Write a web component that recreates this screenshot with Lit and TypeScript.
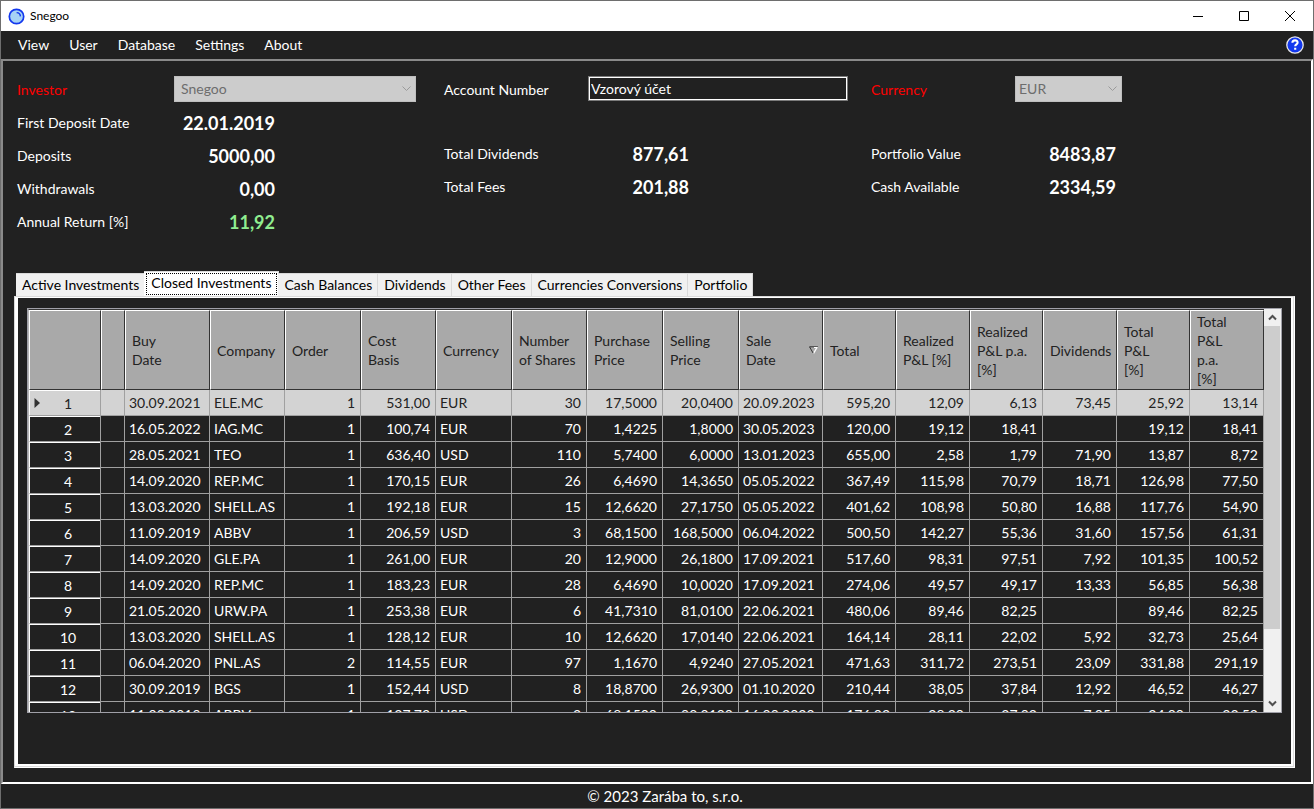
import { LitElement, html, css } from "lit";
import { customElement, state } from "lit/decorators.js";
import { classMap } from "lit/directives/class-map.js";

type Align = "left" | "right";
interface Column { label: string; width: number; align: Align; sorted?: boolean }

const COLUMNS: Column[] = [
  { label: "Buy\nDate", width: 85, align: "left" },
  { label: "Company", width: 75, align: "left" },
  { label: "Order", width: 76, align: "right" },
  { label: "Cost\nBasis", width: 75, align: "right" },
  { label: "Currency", width: 76, align: "left" },
  { label: "Number\nof Shares", width: 75, align: "right" },
  { label: "Purchase\nPrice", width: 76, align: "right" },
  { label: "Selling\nPrice", width: 76, align: "right" },
  { label: "Sale\nDate", width: 84, align: "left", sorted: true },
  { label: "Total", width: 73, align: "right" },
  { label: "Realized\nP&L [%]", width: 74, align: "right" },
  { label: "Realized\nP&L p.a.\n[%]", width: 73, align: "right" },
  { label: "Dividends", width: 74, align: "right" },
  { label: "Total\nP&L\n[%]", width: 73, align: "right" },
  { label: "Total\nP&L\np.a.\n[%]", width: 74, align: "right" },
];

const ROWS: string[][] = [
  "30.09.2021|ELE.MC|1|531,00|EUR|30|17,5000|20,0400|20.09.2023|595,20|12,09|6,13|73,45|25,92|13,14",
  "16.05.2022|IAG.MC|1|100,74|EUR|70|1,4225|1,8000|30.05.2023|120,00|19,12|18,41||19,12|18,41",
  "28.05.2021|TEO|1|636,40|USD|110|5,7400|6,0000|13.01.2023|655,00|2,58|1,79|71,90|13,87|8,72",
  "14.09.2020|REP.MC|1|170,15|EUR|26|6,4690|14,3650|05.05.2022|367,49|115,98|70,79|18,71|126,98|77,50",
  "13.03.2020|SHELL.AS|1|192,18|EUR|15|12,6620|27,1750|05.05.2022|401,62|108,98|50,80|16,88|117,76|54,90",
  "11.09.2019|ABBV|1|206,59|USD|3|68,1500|168,5000|06.04.2022|500,50|142,27|55,36|31,60|157,56|61,31",
  "14.09.2020|GLE.PA|1|261,00|EUR|20|12,9000|26,1800|17.09.2021|517,60|98,31|97,51|7,92|101,35|100,52",
  "14.09.2020|REP.MC|1|183,23|EUR|28|6,4690|10,0020|17.09.2021|274,06|49,57|49,17|13,33|56,85|56,38",
  "21.05.2020|URW.PA|1|253,38|EUR|6|41,7310|81,0100|22.06.2021|480,06|89,46|82,25||89,46|82,25",
  "13.03.2020|SHELL.AS|1|128,12|EUR|10|12,6620|17,0140|22.06.2021|164,14|28,11|22,02|5,92|32,73|25,64",
  "06.04.2020|PNL.AS|2|114,55|EUR|97|1,1670|4,9240|27.05.2021|471,63|311,72|273,51|23,09|331,88|291,19",
  "30.09.2019|BGS|1|152,44|USD|8|18,8700|26,9300|01.10.2020|210,44|38,05|37,84|12,92|46,52|46,27",
  "11.09.2019|ABBV|1|137,73|USD|2|68,1500|90,0100|16.09.2020|176,02|28,20|27,92|7,05|34,00|33,52",
].map((line) => line.split("|"));

const TABS = [
  "Active Investments", "Closed Investments", "Cash Balances", "Dividends",
  "Other Fees", "Currencies Conversions", "Portfolio",
];

@customElement("investments-grid")
export class InvestmentsGrid extends LitElement {
  @state() private current = 0;

  static styles = css`
    :host {
      display: flex;
      min-height: 0;
      border: 1px solid #a0a0a8;
      font-size: 14px;
      line-height: 19px;
      color: #fff;
    }
    .viewport { flex: 1; min-width: 0; overflow: hidden; border-top: 1px solid #333; border-left: 1px solid #b8b8b8; }
    table { width: 100%; table-layout: fixed; border-collapse: separate; border-spacing: 0; }
    th, td { box-sizing: border-box; padding: 0; font-weight: 400; white-space: nowrap; }
    thead th {
      height: 80px;
      background: #a9a9a9;
      color: #222;
      text-align: left;
      vertical-align: middle;
      white-space: pre;
      padding-left: 6px;
      border-top: 1px solid #fff;
      border-left: 1px solid #fff;
      border-right: 1px solid #333;
      border-bottom: 1px solid #333;
    }
    .head { display: flex; align-items: center; justify-content: space-between; padding-right: 4px; }
    tbody td, tbody th { height: 26px; border-right: 1px solid #a0a0a0; border-bottom: 1px solid #a0a0a0; }
    tbody td { padding: 0 5px 0 4px; }
    td.right { text-align: right; }
    tbody th { border-left: 1px solid #fff; box-shadow: inset 0 1px #fff; }
    .rowhead { display: grid; grid-template-columns: 8px 1fr 2px; align-items: center; padding: 1px 4px 0; }
    tr.current { background: #d3d3d3; color: #222; }
    .marker { display: block; }
    .bar { width: 17px; flex: none; display: flex; flex-direction: column; background: #f0f0f0; }
    .bar button { height: 17px; padding: 0; border: 0; background: #f0f0f0; display: grid; place-items: center; }
    .track { flex: 1; display: flex; flex-direction: column; padding-right: 1px; }
    .thumb { height: 82%; background: #cdcdcd; }
  `;

  render() {
    return html`
      <div class="viewport">
        <table aria-label="Closed investments">
          <colgroup>
            <col width="72" /><col width="24" />
            ${COLUMNS.map((c) => html`<col width=${c.width} />`)}
          </colgroup>
          <thead>
            <tr>
              <th></th><th></th>
              ${COLUMNS.map((c) => html`<th scope="col">${c.sorted
                ? html`<div class="head"><span>${c.label}</span><svg width="9" height="8" viewBox="0 0 9 8"><path d="M8.5 0.5L4.5 7.5" stroke="#fff" stroke-width="1.4" /><path d="M9 0.8H0.5L4.2 7.2" fill="none" stroke="#333" /><path d="M5 1.5H8.5" stroke="#fff" /></svg></div>`
                : c.label}</th>`)}
            </tr>
          </thead>
          <tbody>
            ${ROWS.map((row, i) => html`
              <tr class=${classMap({ current: i === this.current })} @click=${() => (this.current = i)}>
                <th scope="row"><div class="rowhead">
                  <span>${i === this.current
                    ? html`<svg class="marker" width="6" height="10" viewBox="0 0 6 10"><path d="M0.5 0V10L6 5Z" fill="#333" /></svg>`
                    : ""}</span><span>${i + 1}</span><span></span>
                </div></th>
                <td></td>
                ${row.map((v, c) => html`<td class=${COLUMNS[c].align}>${v}</td>`)}
              </tr>`)}
          </tbody>
        </table>
      </div>
      <div class="bar">
        <button aria-label="Scroll up"><svg width="9" height="7" viewBox="0 0 9 7"><path d="M1 5.5L4.5 2L8 5.5" fill="none" stroke="#505050" stroke-width="2" /></svg></button>
        <div class="track"><div class="thumb"></div></div>
        <button aria-label="Scroll down"><svg width="9" height="7" viewBox="0 0 9 7"><path d="M1 1.5L4.5 5L8 1.5" fill="none" stroke="#505050" stroke-width="2" /></svg></button>
      </div>
    `;
  }
}

@customElement("app-root")
export class AppRoot extends LitElement {
  @state() private tab = 1;

  static styles = css`
    :host {
      display: flex;
      flex-direction: column;
      box-sizing: border-box;
      height: 100vh;
      min-height: 560px;
      border: 1px solid #6e6e6e;
      background: #212121;
      color: #fff;
      font: 14px/20px Lato, "Open Sans", sans-serif;
    }
    button, input, select { font: inherit; color: inherit; margin: 0; border-radius: 0; }
    .titlebar { display: flex; align-items: center; height: 30px; background: #fff; color: #000; padding-left: 7px; font-size: 12px; }
    .titlebar .name { flex: 1; padding-left: 5px; }
    .titlebar button { width: 46px; height: 30px; padding: 0; border: 0; background: none; display: grid; place-items: center; }
    .menubar { display: flex; align-items: center; height: 28px; padding: 0 9px 0 7px; }
    .menubar nav { flex: 1; display: flex; }
    .menubar button { border: 0; background: none; padding: 0 10px; }
    .menubar .help { display: flex; padding: 0; }
    .body {
      flex: 1;
      min-height: 0;
      display: flex;
      flex-direction: column;
      border: 2px solid #fff;
      border-top-color: #8a8a8a;
      border-left-color: #8a8a8a;
      padding: 12px 0 14px 11px;
    }
    .summary { display: grid; grid-template-columns: repeat(3, 1fr); padding: 0 13px 0 3px; height: 197px; align-items: start; }
    .group { display: grid; align-items: center; grid-auto-rows: 33px; }
    .first { grid-template-columns: 157px 101px 1fr; }
    .second { grid-template-columns: 144px 101px 1fr; grid-template-rows: 33px 31px; }
    .top { display: grid; align-items: center; grid-column: 1 / -1; grid-template-columns: subgrid; }
    .top > :last-child { grid-column: 2 / -1; margin-bottom: 2px; }
    .required { color: #f00; }
    .value { font-size: 18px; font-weight: 700; text-align: right; }
    .good { color: #90ee90; }
    .gap { grid-column: 1 / -1; }
    .combo { display: grid; height: 26px; align-items: center; }
    .combo.wide { width: 242px; }
    .combo.narrow { width: 107px; }
    .combo select, .combo svg { grid-area: 1 / 1; }
    .combo select { appearance: none; height: 26px; width: 100%; padding: 0 6px; border: 1px solid #bfbfbf; background: #ccc; color: #6d6d6d; opacity: 1; }
    .combo.narrow select { padding-left: 3px; }
    .combo svg { justify-self: end; margin-right: 5px; }
    .account { box-sizing: border-box; width: 260px; height: 25px; padding: 0 2px 1px; border: 1px solid #7a7a7a; outline: 1px solid #fff; outline-offset: -2px; background: #212121; }
    .tabs { display: flex; align-items: flex-end; padding-left: 2px; height: 26px; }
    .tabs button {
      height: 23px; padding: 0 5px 0 6px; border: solid #d9d9d9; border-width: 1px 1px 0 0;
      background: #f0f0f0; color: #000; white-space: nowrap;
    }
    .tabs button.active { height: 25px; background: #fff; padding: 0 1px 1px 2px; margin: 0 -1px; }
    .tabs button span { display: block; }
    .tabs button.active span { border: 1px dotted #000; padding: 0 5px 2px 4px; line-height: 18px; }
    .page {
      flex: 1;
      min-height: 0;
      display: flex;
      flex-direction: column;
      margin-right: 16px;
      border: 1px solid #fff;
      border-top-color: #d9d9d9;
      border-left-color: #d9d9d9;
      padding: 11px 12px 54px;
      box-shadow: inset -1px -1px #dcdcdc, inset 3px 1px #fff, inset -3px -3px #fff;
    }
    investments-grid { flex: 1; }
    footer { height: 24px; display: grid; place-items: center; padding-left: 16px; font-size: 15px; line-height: 24px; }
  `;

  private arrow = html`<svg width="9" height="6" viewBox="0 0 9 6"><path d="M0.5 0.5L4.5 4.5L8.5 0.5" fill="none" stroke="#9a9a9a" /></svg>`;

  render() {
    return html`
      <header class="titlebar">
        <svg width="17" height="17" viewBox="0 0 17 17"><circle cx="8.5" cy="8.5" r="7.2" fill="#a6d3f5" stroke="#1338ee" stroke-width="1.7" /><path d="M8.6 4.6A4 4 0 0 1 12.4 8.4" fill="none" stroke="#1338ee" stroke-width="1.4" /></svg>
        <span class="name">Snegoo</span>
        <button aria-label="Minimize"><svg width="10" height="10" viewBox="0 0 10 10"><path d="M0 5.5H10" stroke="#000" /></svg></button>
        <button aria-label="Maximize"><svg width="10" height="10" viewBox="0 0 10 10"><path d="M0.5 0.5H9.5V9.5H0.5Z" fill="none" stroke="#000" /></svg></button>
        <button aria-label="Close"><svg width="10" height="10" viewBox="0 0 10 10"><path d="M0 0L10 10M10 0L0 10" stroke="#000" /></svg></button>
      </header>
      <div class="menubar">
        <nav>${["View", "User", "Database", "Settings", "About"].map((m) => html`<button>${m}</button>`)}</nav>
        <button class="help" aria-label="Help"><svg width="18" height="18" viewBox="0 0 18 18"><circle cx="9" cy="9" r="8.2" fill="#1338ee" stroke="#e8e8e8" stroke-width="1.3" /><path d="M6.4 6.8C6.4 3.6 11.8 3.6 11.6 6.6C11.5 8.4 9.2 8.3 9.2 10.3M9.2 11.8V13.8" fill="none" stroke="#fff" stroke-width="2.1" /></svg></button>
      </div>
      <main class="body">
        <section class="summary">
          <div class="group first">
            <div class="top"><label class="required" for="investor">Investor</label>
              <div class="combo wide"><select id="investor" disabled><option>Snegoo</option></select>${this.arrow}</div></div>
            <span>First Deposit Date</span><span class="value">22.01.2019</span><span></span>
            <span>Deposits</span><span class="value">5000,00</span><span></span>
            <span>Withdrawals</span><span class="value">0,00</span><span></span>
            <span>Annual Return [%]</span><span class="value good">11,92</span><span></span>
          </div>
          <div class="group second">
            <div class="top"><label for="account">Account Number</label>
              <input class="account" id="account" .value=${"Vzorový účet"} /></div>
            <div class="gap"></div>
            <span>Total Dividends</span><span class="value">877,61</span><span></span>
            <span>Total Fees</span><span class="value">201,88</span><span></span>
          </div>
          <div class="group second">
            <div class="top"><label class="required" for="currency">Currency</label>
              <div class="combo narrow"><select id="currency" disabled><option>EUR</option></select>${this.arrow}</div></div>
            <div class="gap"></div>
            <span>Portfolio Value</span><span class="value">8483,87</span><span></span>
            <span>Cash Available</span><span class="value">2334,59</span><span></span>
          </div>
        </section>
        <div class="tabs" role="tablist">
          ${TABS.map((t, i) => html`<button role="tab" aria-selected=${i === this.tab ? "true" : "false"}
            class=${classMap({ active: i === this.tab })} @click=${() => (this.tab = i)}><span>${t}</span></button>`)}
        </div>
        <section class="page" role="tabpanel"><investments-grid></investments-grid></section>
      </main>
      <footer>© 2023 Zarába to, s.r.o.</footer>
    `;
  }
}
